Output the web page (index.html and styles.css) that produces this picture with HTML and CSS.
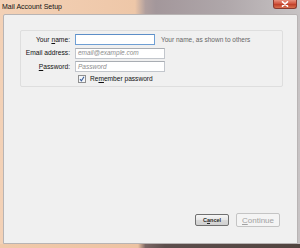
FILE: index.html
```html
<!DOCTYPE html>
<html>
<head>
<meta charset="utf-8">
<link rel="stylesheet" href="styles.css">
</head>
<body>
<div class="window">
  <div class="titlebar">
    <span class="title">Mail Account Setup</span>
    <span class="close"><svg width="8" height="6" viewBox="0 0 8 6"><path d="M1.5 0.8 L6.5 5.2 M6.5 0.8 L1.5 5.2" stroke="#fff" stroke-width="1.6" stroke-linecap="round"/></svg></span>
  </div>
  <div class="content">
    <div class="group">
      <div class="form">
        <label class="lbl">Your <u>n</u>ame:</label>
        <div class="field"><span class="input focus"></span><span class="hint">Your name, as shown to others</span></div>
        <label class="lbl">Email address:</label>
        <div class="field"><span class="input wide"><span class="ph">email@example.com</span></span></div>
        <label class="lbl"><u>P</u>assword:</label>
        <div class="field"><span class="input wide"><span class="ph">Password</span></span></div>
        <span></span>
        <div class="check">
          <svg class="box" width="8" height="8" viewBox="0 0 8 8"><rect x="0.5" y="0.5" width="7" height="7" fill="#f4f6f9" stroke="#8f8f8f"/><path d="M2 4.2 L3.4 5.8 L6 1.8" fill="none" stroke="#3a5e9a" stroke-width="1.1"/></svg>
          <span>Re<u>m</u>ember password</span>
        </div>
      </div>
    </div>
    <div class="spacer"></div>
    <div class="buttons">
      <span class="btn cancel">C<u>a</u>ncel</span>
      <span class="btn cont"><u>C</u>ontinue</span>
    </div>
  </div>
  <div class="bottom"></div>
</div>
</body>
</html>
```
FILE: styles.css
```css
html, body {
  margin: 0;
  padding: 0;
}
body {
  width: 300px;
  height: 248px;
  overflow: hidden;
  font-family: "Liberation Sans", Arial, sans-serif;
}
.window {
  width: 300px;
  height: 248px;
  display: flex;
  flex-direction: column;
  background: linear-gradient(to right, #f3d1b6 0%, #eec7a8 45%, #b09f9e 48.5%, #a3979b 52%, #afa7aa 75%, #c7c3c4 100%);
}
.titlebar {
  height: 14px;
  display: flex;
  align-items: flex-start;
  flex: none;
}
.title {
  font-size: 7px;
  color: #111;
  padding: 3px 0 0 2px;
  line-height: 8px;
}
.close {
  margin-left: auto;
  margin-right: 3px;
  width: 24px;
  height: 9px;
  box-sizing: border-box;
  border: 1px solid #8a3a30;
  border-top: none;
  border-radius: 0 0 3px 3px;
  background: linear-gradient(#e6917f, #d2553f 45%, #c0402a 55%, #d8704f);
  display: flex;
  align-items: center;
  justify-content: center;
}
.close svg { display: block; }
.content {
  flex: 1;
  margin: 0 2px 0 3px;
  background: #f0f0f0;
  border: 1px solid #b8b4b4;
  border-radius: 2px 2px 0 0;
  display: flex;
  flex-direction: column;
}
.bottom {
  height: 4px;
  flex: none;
  background: linear-gradient(to right, #f0c9aa 0%, #edc3a3 46%, #7a6664 48.5%, #5c4e4c 55%, #51443f 100%);
}
.group {
  margin: 15px 14px 0 16px;
  border: 1px solid #dedede;
  border-radius: 2px;
  padding: 3px 0 3px 0;
}
.form {
  display: grid;
  grid-template-columns: 49px auto;
  column-gap: 5px;
  row-gap: 2.5px;
  align-items: center;
}
.lbl {
  font-size: 6.7px;
  color: #101010;
  text-align: right;
  line-height: 8px;
  white-space: nowrap;
}
.field {
  display: flex;
  align-items: center;
}
.input {
  width: 80px;
  height: 11px;
  box-sizing: border-box;
  background: #fff;
  border: 1px solid #c2c6cc;
  border-top-color: #a9adb3;
  display: flex;
  align-items: center;
  padding-left: 2px;
}
.input.focus {
  border-color: #6f9fd4;
  border-top-color: #5c8ec8;
}
.input.wide { width: 90px; }
.ph {
  font-size: 6.5px;
  font-style: italic;
  color: #8d8d8d;
  line-height: 8px;
}
.hint {
  margin-left: 6px;
  font-size: 6.5px;
  color: #666;
  line-height: 8px;
  white-space: nowrap;
}
.check {
  display: flex;
  align-items: center;
  gap: 4px;
  padding-left: 3px;
  margin-top: 0.5px;
  font-size: 6.6px;
  color: #101010;
  line-height: 8px;
}
.check .box { display: block; }
.spacer { flex: 1; }
.buttons {
  display: flex;
  justify-content: flex-end;
  align-items: center;
  gap: 7px;
  padding: 0 17px 16px 0;
}
.btn {
  box-sizing: border-box;
  display: flex;
  align-items: center;
  justify-content: center;
  border-radius: 2px;
}
.cancel {
  width: 34px;
  height: 12px;
  border: 1px solid #707070;
  background: linear-gradient(#f6f6f6, #e6e6e6 50%, #d9d9d9 51%, #d0d0d0);
  font-size: 5.5px;
  font-weight: bold;
  color: #2a2a2a;
}
.cont {
  width: 44px;
  height: 14px;
  border: 1px solid #c4c4c4;
  background: #f4f4f4;
  font-size: 8px;
  color: #a2a2a2;
}
```
